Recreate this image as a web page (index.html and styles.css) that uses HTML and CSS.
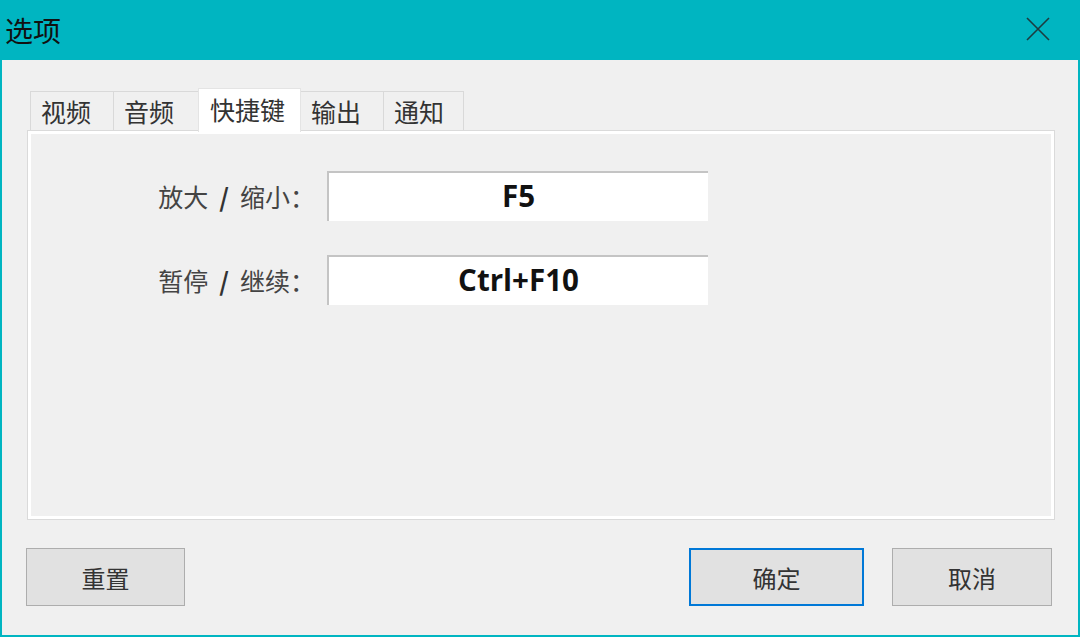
FILE: index.html
```html
<!DOCTYPE html>
<html lang="zh-CN">
<head>
    <meta charset="UTF-8">
    <meta name="viewport" content="width=device-width, initial-scale=1.0">
    <title>选项</title>
    <link rel="stylesheet" href="styles.css">
</head>
<body>

<div class="window">
    <div class="title-bar">
        <span class="title">选项</span>
        <div class="close-btn">
            <svg width="24" height="24" viewBox="0 0 24 24">
                <path d="M1 1 L23 23 M23 1 L1 23" stroke="#1c3c40" stroke-width="1.6" fill="none"/>
            </svg>
        </div>
    </div>

    <div class="content">
        <div class="tabs">
            <div class="tab tab-video">视频</div>
            <div class="tab tab-audio">音频</div>
            <div class="tab active">快捷键</div>
            <div class="tab tab-output">输出</div>
            <div class="tab tab-notify">通知</div>
        </div>

        <div class="tab-panel">
            <div class="shortcut-form">
                <label class="field-label">放大<span class="sep">/</span>缩小<span class="colon">：</span></label>
                <div class="key-box">F5</div>
                <label class="field-label">暂停<span class="sep">/</span>继续<span class="colon">：</span></label>
                <div class="key-box">Ctrl+F10</div>
            </div>
        </div>

        <div class="button-row">
            <button class="btn btn-reset">重置</button>
            <div class="spacer"></div>
            <button class="btn btn-default">确定</button>
            <button class="btn">取消</button>
        </div>
    </div>
</div>

</body>
</html>
```

FILE: styles.css
```css
:root {
    --teal: #00b5c1;
    --dialog-bg: #f0f0f0;
    --tab-border: #d9d9d9;
    --button-bg: #e1e1e1;
    --button-border: #adadad;
    --focus-blue: #0078d7;
}

body {
    margin: 0;
    background-color: var(--dialog-bg);
    font-family: "Noto Sans CJK SC", "Noto Sans", sans-serif;
}

.window {
    width: 1080px;
    height: 637px;
    box-sizing: border-box;
    border: 2px solid var(--teal);
    border-top: none;
    display: flex;
    flex-direction: column;
}

.title-bar {
    height: 60px;
    background-color: var(--teal);
    display: flex;
    align-items: center;
    justify-content: space-between;
    margin: 0 -2px;
    padding: 0 30px 0 5px;
}

.title {
    font-size: 28px;
    color: #111;
}

.close-btn {
    width: 24px;
    height: 24px;
    margin-top: -2px;
}

.content {
    flex: 1;
    padding: 28px 23px 0 25px;
    display: flex;
    flex-direction: column;
}

/* tab strip */
.tabs {
    display: flex;
    align-items: flex-end;
    padding-left: 3px;
    height: 42px;
}

.tab {
    height: 39px;
    box-sizing: border-box;
    border: 1px solid var(--tab-border);
    border-bottom: none;
    margin-left: -1px;
    padding-left: 10px;
    font-size: 25px;
    line-height: 38px;
    color: #333;
    background-color: var(--dialog-bg);
}

.tab-video { width: 84px; margin-left: 0; }
.tab-audio { width: 86px; }
.tab-output { width: 84px; }
.tab-notify { width: 81px; }

.tab.active {
    width: 103px;
    height: 44px;
    margin: 0 0 -2px -1px;
    padding-left: 11px;
    background-color: #fff;
    border-color: #e4e4e4;
    position: relative;
    z-index: 1;
    line-height: 40px;
}

.tab-panel {
    height: 390px;
    box-sizing: border-box;
    border: 1px solid #dadada;
    box-shadow: inset 0 0 0 3px #fff;
}

.shortcut-form {
    display: grid;
    grid-template-columns: 287px 381px;
    column-gap: 12px;
    row-gap: 34px;
    padding-top: 40px;
}

.field-label {
    text-align: right;
    font-size: 25px;
    color: #444;
    line-height: 50px;
    white-space: nowrap;
}

.sep {
    margin: 0 11px;
    font-weight: bold;
    color: #333;
}

.colon {
    font-family: "Noto Sans CJK TC", sans-serif;
}

.key-box {
    height: 50px;
    box-sizing: border-box;
    background-color: #fff;
    border-top: 2px solid #c4c4c4;
    border-left: 2px solid #c4c4c4;
    text-align: center;
    font-family: "Open Sans", "Liberation Sans", sans-serif;
    font-weight: bold;
    font-size: 29.5px;
    line-height: 46px;
    color: #111;
}

/* bottom buttons */
.button-row {
    display: flex;
    gap: 28px;
    margin: 28px 3px 0 -1px;
}

.spacer {
    flex: 1;
}

.btn {
    width: 160px;
    height: 58px;
    background-color: var(--button-bg);
    border: 1px solid var(--button-border);
    font-family: "Noto Sans CJK SC", "Noto Sans", sans-serif;
    font-size: 24px;
    color: #333;
    padding: 0;
}

.btn-reset {
    width: 159px;
}

.btn-default {
    width: 175px;
    border: 2px solid var(--focus-blue);
}
```
